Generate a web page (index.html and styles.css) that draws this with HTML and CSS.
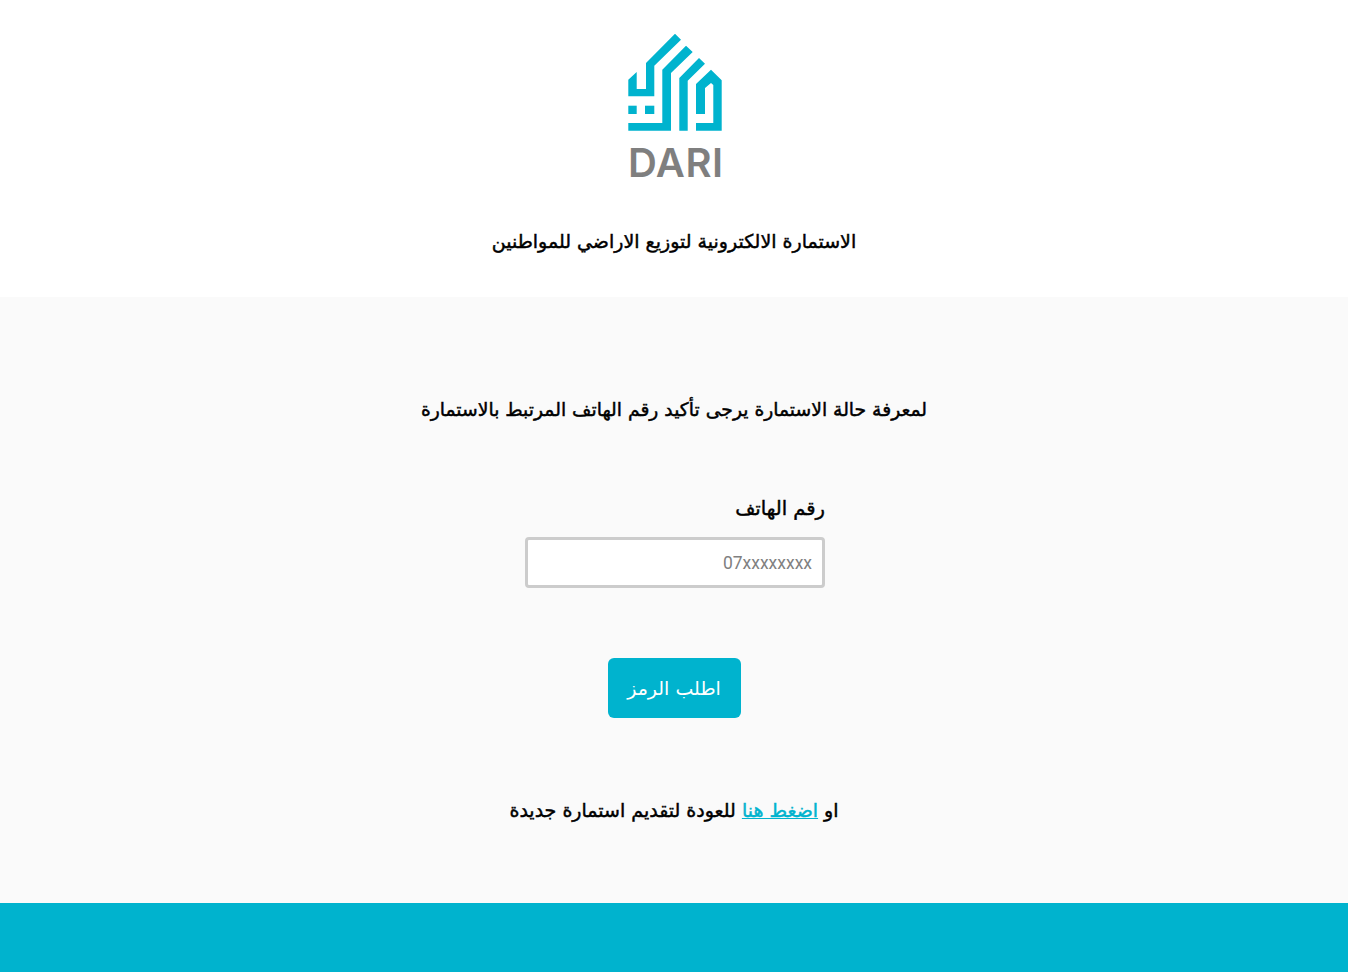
FILE: index.html
```html
<!DOCTYPE html>
<html lang="ar" dir="rtl">
<head>
<meta charset="utf-8">
<title>DARI</title>
<link rel="stylesheet" href="styles.css">
</head>
<body>
<header class="top">
  <div class="logo">
    <svg class="mark" width="96" height="99" viewBox="626 33 96 99" aria-hidden="true">
      <g fill="#00b3ce">
        <polygon points="675,33.7 681,39.7 654.3,65.7 654.3,96.3 628.3,96.3 628.3,79.7 636.7,72 636.7,89 646,89 646,63"/>
        <polygon points="686,45.7 692.7,52 671,73 671,130.7 628.3,130.7 628.3,123 662.3,123 662.3,69.7"/>
        <polygon points="699,58 705,63.7 687.7,80.7 687.7,130.7 679.3,130.7 679.3,78"/>
        <polygon points="711,69.7 721.7,80.3 721.7,130.7 696,130.7 696,123 713.3,123 713.3,85 711,83 705,88 705,114 696,114 696,84"/>
        <rect x="628.3" y="105.7" width="8.4" height="8.3"/>
        <rect x="645" y="105.7" width="9.3" height="8.3"/>
      </g>
    </svg>
    <div class="word">DARI</div>
  </div>
  <h1 class="title">الاستمارة الالكترونية لتوزيع الاراضي للمواطنين</h1>
</header>
<main class="panel">
  <p class="lead">لمعرفة حالة الاستمارة يرجى تأكيد رقم الهاتف المرتبط بالاستمارة</p>
  <form class="form">
    <label class="label" for="phone">رقم الهاتف</label>
    <input class="input" id="phone" type="text" placeholder="07xxxxxxxx">
    <button class="btn" type="button">اطلب الرمز</button>
  </form>
  <p class="back">او <a href="#">اضغط هنا</a> للعودة لتقديم استمارة جديدة</p>
</main>
<footer class="foot"></footer>
</body>
</html>
```
FILE: styles.css
```css
* { box-sizing: border-box; }
html, body { margin: 0; padding: 0; }
body { font-family: "DejaVu Sans", "Noto Sans", sans-serif; color: #000; background: #fff; height: 972px; display: flex; flex-direction: column; overflow: hidden; }
.top { height: 297px; padding-top: 33px; display: flex; flex-direction: column; align-items: center; }
.logo { width: 96px; display: flex; flex-direction: column; align-items: center; }
.mark { display: block; }
.word { align-self: flex-start; width: 94px; text-align: center; font-family: "Inter", sans-serif; font-weight: 600; font-size: 40px; line-height: 29px; height: 29px; margin-top: 16px; color: #7f7f7f; direction: ltr; white-space: nowrap; letter-spacing: 0.5px; }
.title, .lead, .label, .back { font-size: 19px; font-weight: 400; line-height: 24px; -webkit-text-stroke: 0.45px #000; }
.title { margin: 52px 0 0; }
.panel { height: 606px; background: #fafafa; padding-top: 100px; display: flex; flex-direction: column; align-items: center; }
.lead { font-size: 18.75px; line-height: 26px; margin: 0; }
.form { width: 302px; margin-top: 74px; display: flex; flex-direction: column; align-items: center; }
.label { align-self: stretch; font-size: 19.5px; }
.input { align-self: flex-start; width: 300px; height: 51px; margin-top: 16px; border: 3px solid #ccc; border-radius: 4px; background: #fff; padding: 0 10px; font-family: "Roboto", sans-serif; font-weight: 400; font-size: 17.5px; direction: rtl; outline: none; }
.input::placeholder { color: #808080; opacity: 1; }
.btn { width: 133px; height: 60px; margin-top: 70px; border: 0; border-radius: 6px; background: #00b3ce; color: #fff; font-family: inherit; font-size: 19px; padding: 0; }
.back { margin: 80px 0 0; }
.back a { color: #00b3ce; -webkit-text-stroke-color: #00b3ce; }
.foot { flex: 1; background: #00b3ce; }
```
